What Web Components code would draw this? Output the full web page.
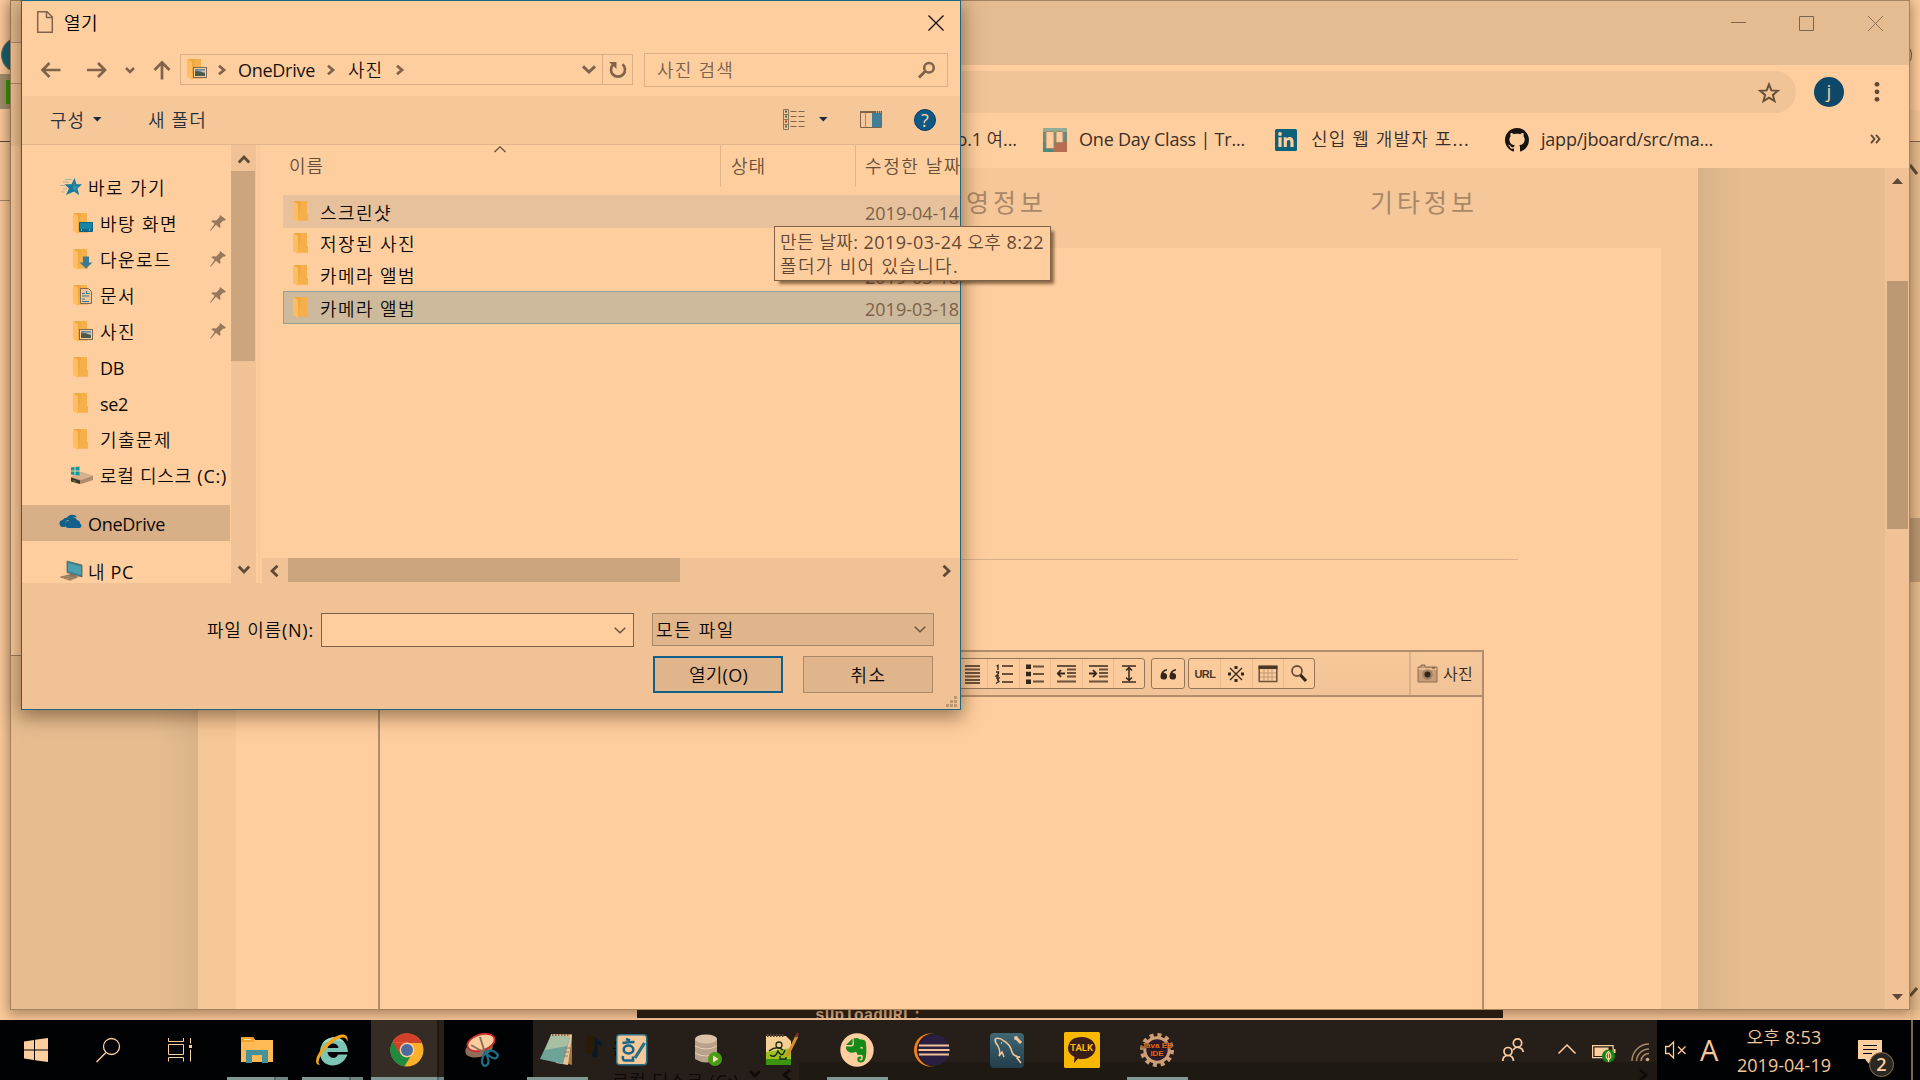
<!DOCTYPE html>
<html lang="ko">
<head>
<meta charset="utf-8">
<title>열기</title>
<style>
html,body{margin:0;padding:0;width:1920px;height:1080px;overflow:hidden;background:#fdcc9e}
body{font:400 18px/24px "Open Sans","Noto Sans CJK KR DemiLight","Noto Sans CJK KR Light","Noto Sans CJK KR",sans-serif;color:#17130f}
</style>
</head>
<body>
<desk-top></desk-top>
<script>
const def=(name,css,html)=>customElements.define(name,class extends HTMLElement{
  constructor(){super();this.attachShadow({mode:'open'}).innerHTML=
    `<style>*{box-sizing:border-box}svg{display:block;flex:none;overflow:visible}:host{display:block;box-sizing:border-box}${css}</style>${html}`;}
});
const svg=(w,h,body,style='')=>`<svg width="${w}" height="${h}" viewBox="0 0 ${w} ${h}" fill="none" style="${style}">${body}</svg>`;

/* text run tracked to a fixed measure */
customElements.define('t-x',class extends HTMLElement{
  constructor(){super();this.attachShadow({mode:'open'}).innerHTML=
    '<style>:host{display:block;flex:none;white-space:pre}span{display:inline-block}</style><span><slot></slot></span>';}
  connectedCallback(){
    const w=+this.getAttribute('w'),n=this.textContent.length,s=this.shadowRoot.querySelector('span');
    if(!w)return;
    const nat=s.getBoundingClientRect().width;
    this.style.letterSpacing=((w+1-nat)/n)+'px';
    this.style.width=w+'px';
  }
});

const folder='<path d="M1 0h13v13l1 .6v5.8H5z" fill="#eda83f"/><path d="M8 0h6v13l1 .8v5.6H5z" fill="#f9b14c" opacity=".8"/><path d="M0 0l5 3v18l-5-3z" fill="#ffbc62"/>';
const pic='<rect x="6.500" y="8.500" width="13" height="10" fill="#fdcc9e" stroke="#836850"/><path d="M8 10h10v7H8z" fill="#5f86a5"/><path d="M8 12.500q4-1 10 2v2.500H8z" fill="#4b5a45"/><path d="M8 11.500q5 0 7 1.500l3 .5v-2z" fill="#d8bf9e"/>';
const I={
 folder:svg(21,21,folder),
 pictures:svg(21,21,folder+pic),
 desktop:svg(21,21,folder+'<path d="M6.500 9.500h13v9h-13z" fill="#1786a5" stroke="#0c5f85"/><path d="M7 17h12" stroke="#0b4a68"/><path d="M8 17h1M16 17h1" stroke="#ffce9f"/>'),
 down:svg(21,21,folder+'<path d="M10 7.500h6v6h3.500l-6.500 6-6.500-6H10z" fill="#3c7a91"/>'),
 docs:svg(21,21,folder+'<path d="M7.500 3.500h8l3 3v12h-11z" fill="#f3c596" stroke="#836850"/><path d="M9 8.500h3M13.500 8.500h3M9 11h7M9 14h3M9 16.500h7M13.500 6v3" stroke="#307d92" stroke-width="1.200"/>'),
 star:svg(22,18,'<path d="M14.500 0l2 6.300H22l-4.600 4.200 1.800 6.700-5.200-3.600L6 17l3-6.500L4.500 6.300h7z" fill="#16799b"/><path d="M5 1.500h7M3 4h6M0 7.500h5M3 11h4M1 14h4" stroke="#8aa79a" stroke-width=".7"/><path d="M14 3l1 5 4 0-3 2 1 4-4-3z" fill="#3793aa"/>'),
 drive:svg(23,18,'<path d="M0 11l10-5 12 4v4L10 18 0 15z" fill="#b08c6d"/><path d="M0 11l10-5 12 4-12 4z" fill="#d8b18c"/><path d="M0 11.500l9 3V18l-9-2.500z" fill="#403427"/><path d="M2 14.500l3 1" stroke="#3aa046"/><path d="M0 1.500l3.500-.5v3.500H0zM4.500 1l4-.6v4.100h-4zM0 5.500h3.500V9L0 8.500zM4.500 5.500h4v4.100l-4-.6z" fill="#0c9a9f"/>'),
 cloud:svg(22,14,'<path d="M5 13H3.500A3.500 3.500 0 0 1 2.600 6 5 5 0 0 1 7 3.500 6 6 0 0 1 17 3.200q-5-.6-6.600 2.300Q5 6 5 10.500z" fill="#11618c"/><path d="M8.500 14a3.500 3.500 0 0 1-.2-7 4.600 4.600 0 0 1 8.800-.8q3 .2 2.900 3.400a2.300 2.300 0 0 1-.4 4.400z" fill="#11618c"/>','margin-top:-4px'),
 pc:svg(24,21,'<path d="M8 0l15 4v12L8 11.500z" fill="#35849a"/><path d="M9 2l13 3.500v8.500L9 10z" fill="#4aa0ad"/><path d="M8 0l15 4v12L8 11.500z" stroke="#6b6257" stroke-width=".8"/><path d="M0 16l11-3 10 2.500L11 20z" fill="#b79470"/><path d="M2 16.300l9-2.300M5 17.300l10-2.300M9 18.300l9-2" stroke="#7f6b57" stroke-width=".8"/><path d="M11 12.500l6 1.600v2l-6-1z" fill="#86715c"/>','margin-left:-1px'),
 pin:svg(16,16,'<path d="M10 0l6 4.500-1.200 1-1.800.2-3 3 .6 3.300-1.300.8L6 9.800.8 15.700 0 15.500l4.600-6.700L1.300 6.300 2.600 5.200l3.500.2 3.300-3.100z" fill="#96795d"/>'),
};
const stroke=(d,w=1,c='#7f644c')=>`<path d="${d}" stroke="${c}" stroke-width="${w}"/>`;
const chevR=svg(9,10,stroke('M1 .8l5 4.200-5 4.200',2.800),'margin:0');
const thinV=svg(12,7,stroke('M.7.800l5.300 5 5.300-5',1.500,'#6b543f'));
const caret=svg(9,5,'<path d="M0 0h8.500L4.300 4.500z" fill="#1b2a38"/>');

def('title-row',`:host{height:43px;display:flex;padding:10px 0 0 15px}
t-x{margin:0 0 0 11px;color:#000}.x{margin:4px 16px 0 auto}`,
 svg(16,22,'<path d="M.7.700H10L15.300 6v15.300H.7z" stroke="#7f644c" stroke-width="1.500"/><path d="M9.500 1v5.500H15" stroke="#7f644c" stroke-width="1.500"/>')+
 `<t-x w="33">열기</t-x>`+svg(16,16,stroke('M.5.500l15 15M15.500.5l-15 15',1.300,'#120d08'),'').replace('<svg','<svg class="x"'));

def('address-row',`:host{height:52px;display:flex;padding-left:19px;position:static}
.n{display:flex;height:52px;align-items:center}.box{display:flex;align-items:center;height:31px;width:453px;border:1px solid #d7ae86;margin:10px 0 0 9px;padding-left:6px}
.r{border-left:1px solid #d7ae86;height:29px;width:30px;display:flex;align-items:center;justify-content:center}
.s{width:304px;height:34px;margin:9px 0 0 11px;border:1px solid #d7ae86;display:flex;align-items:center;padding:0 11px 0 12px;color:#7c624b}`,
 `<div class="n">${svg(20,16,stroke('M19.500 8H2M8.500 1L1.500 8l7 7',2.700))}${svg(20,16,stroke('M0 8h17.500M11 1l7 7-7 7',2.700),'margin-left:26px')}${svg(10,7,stroke('M1 1l4 4 4-4',2.500),'margin-left:18px')}${svg(18,19,stroke('M9 18.500V2M1.500 9L9 1.500 16.500 9',2.700),'margin-left:18px')}</div>
 <div class="box" style="color:#17130f">${I.pictures}<i style="width:10px"></i>${chevR}<t-x w="76" style="margin-left:11px">OneDrive</t-x><i style="width:13px"></i>${chevR}<t-x w="34" style="margin-left:12px">사진</t-x><i style="width:14px"></i>${chevR}
 <i style="flex:1"></i>${svg(14,9,stroke('M1 1.300l6 5.700 6-5.700',3),'margin-right:6px')}<div class="r">${svg(18,18,'<path d="M4.500 3.300A7 7 0 1 0 13.500 3.300" stroke="#7f644c" stroke-width="2.700"/><path d="M0 1h7.500v7z" fill="#7f644c"/>')}</div></div>
 <div class="s"><t-x w="76">사진 검색</t-x><i style="flex:1"></i>${svg(18,18,'<circle cx="11" cy="6.700" r="4.800" stroke="#7f644c" stroke-width="2.500"/><path d="M7.500 10L1 16.500" stroke="#7f644c" stroke-width="3"/>')}</div>`);

def('command-bar',`:host{height:49px;display:flex;align-items:center;background:#f5c799;border-bottom:1px solid #e0b58b;padding-left:28px;padding-bottom:1px;color:#26313c}
.h{width:22px;height:22px;border-radius:50%;background:#0d5987;border:1px solid #083a5c;color:#ffce9f;display:grid;place-items:center;font:400 18px/20px "Open Sans"}`,
 `<t-x w="34">구성</t-x><i style="width:9px"></i>${caret}<t-x w="58" style="margin-left:46px">새 폴더</t-x><i style="width:577px"></i>
 ${svg(22,22,'<path d="M.5.500h5v20h-5zM.5 5.500h5M.5 10.500h5M.5 15.500h5" stroke="#8d7359"/><path d="M2 2.500h2M2 7.500h2M2 17.500h2" stroke="#35704c" stroke-width="2"/><path d="M2 12.500h2" stroke="#a3342a" stroke-width="2"/><path d="M7.500 2.500h6M15.500 2.500h6M7.500 7.500h6M15.500 7.500h6M7.500 12.500h6M15.500 12.500h6M7.500 17.500h6M15.500 17.500h6" stroke="#7f644c"/>')}<i style="width:14px"></i>${caret}<i style="width:32px"></i>
 ${svg(22,17,'<path d="M.5.500h21v16H.5z" stroke="#7f644c"/><path d="M0 1h22" stroke="#7f644c" stroke-width="2"/><path d="M5.500 2v14" stroke="#a98868"/><path d="M12 2h9v14h-9z" fill="#3f8096"/><path d="M16 1h1M18 1h1M20 1h1" stroke="#ffce9f"/>')}<i style="width:32px"></i><div class="h">?</div>`);

def('nav-item',`:host{height:36px;display:flex;align-items:center;width:208px;padding-left:51px;color:#0c0907;flex:none}
:host([root]){padding-left:38px}:host([drive]){padding-left:49px}:host([selected]){background:#d8af87}
.i{width:27px;flex:none;display:flex;align-items:center;height:36px}:host([root]) .i{width:28px}:host([drive]) .i{width:29px}
.t{padding-top:1px}.p{display:none;margin-left:auto;margin-right:4px}:host([pinned]) .p{display:block}`,
 `<div class="i"><slot name="icon"></slot></div><div class="t"><slot></slot></div><div class="p">${I.pin}</div>`);
customElements.define('i-con',class extends HTMLElement{constructor(){super();this.attachShadow({mode:'open'});}
 connectedCallback(){this.shadowRoot.innerHTML='<style>:host{display:block}svg{display:block;overflow:visible}</style>'+I[this.getAttribute('name')];}});
const nav=(ic,t,w,a='')=>`<nav-item ${a}><i-con slot="icon" name="${ic}"></i-con><t-x w="${w}">${t}</t-x></nav-item>`;

def('nav-pane',`:host{width:209px;height:438px;overflow:hidden;padding-top:24px}`,
 nav('star','바로 가기',77,'root')+nav('desktop','바탕 화면',77,'pinned')+nav('down','다운로드',71,'pinned')+nav('docs','문서',35,'pinned')+nav('pictures','사진',35,'pinned')+
 nav('folder','DB',23)+nav('folder','se2',27)+nav('folder','기출문제',71)+nav('drive','로컬 디스크 (C:)',126,'drive')+
 '<div style="height:12px"></div>'+nav('cloud','OneDrive',76,'root selected')+'<div style="height:12px"></div>'+nav('pc','내 PC',45,'root'));

def('v-scroll',`:host{width:25px;height:438px;background:#f0c295;display:flex;flex-direction:column;align-items:center;padding-bottom:9px}
.t{width:24px;height:190px;background:#cca57e;margin-right:1px;margin-top:7px}`,
 svg(12,9,stroke('M.8 7.500L6 2l5.200 5.500',2.800,'#5f4a37'),'margin-top:10px')+'<div class="t"></div><i style="flex:1"></i>'+svg(12,9,stroke('M.8 1.500L6 7l5.200-5.500',2.800,'#5f4a37')));

def('file-row',`:host{height:32px;display:flex;flex:none;align-items:center;margin-left:21px;padding-left:10px;color:#0c0907}
:host([hover]){background:#e6c19b;height:33px;margin-bottom:-1px}:host([selected]){background:#cdb99b;border:1px solid #92a298;border-right:0;height:33px;padding-left:9px}
.d{margin-left:auto;color:#7d6249;padding-top:3px;width:95px}.n{margin-left:6px;padding-top:2px}`,
 `<i-con name="folder"></i-con><div class="n"><slot></slot></div><div class="d"><slot name="date"></slot></div>`);
const row=(t,w,d,a='')=>`<file-row ${a}><t-x w="${w}">${t}</t-x>${d?`<t-x w="93" slot="date">${d}</t-x>`:''}</file-row>`;

def('file-list',`:host{width:698px;height:438px;overflow:hidden;display:flex;flex-direction:column}
.h{display:flex;height:42px;align-items:center;color:#675039}.h>div{height:42px;display:flex;align-items:center;flex:none}
.c{border-left:1px solid #e0b58b}.sort{align-self:flex-start;margin-top:1px}
.s{height:25px;background:#f0c295;display:flex;align-items:center;margin-top:auto;padding:0 9px 0 8px}.t{width:392px;height:24px;background:#cca57e;align-self:flex-start;margin-left:9px}`,
 `<div class="h"><div style="width:458px;padding-left:27px"><t-x w="34">이름</t-x><div class="sort" style="margin-left:171px">${svg(12,7,stroke('M.5 6L6 .8 11.500 6',1.200,'#5f4a37'))}</div></div>
 <div class="c" style="width:135px;padding-left:10px"><t-x w="34">상태</t-x></div><div class="c" style="width:110px;padding-left:9px"><t-x w="96">수정한 날짜</t-x></div></div>
 <div style="height:8px;flex:none"></div>`+row('스크린샷',71,'2019-04-14','hover')+row('저장된 사진',95,'')+row('카메라 앨범',95,'2019-03-18')+row('카메라 앨범',95,'2019-03-18','selected')+
 `<div class="s">${svg(9,12,stroke('M7.500.8L2 6l5.500 5.200',2.800,'#5f4a37'))}<div class="t"></div><i style="flex:1"></i>${svg(9,12,stroke('M1.500.8L7 6l-5.500 5.200',2.800,'#5f4a37'))}</div>`);

def('dialog-foot',`:host{height:126px;background:#f0c295;padding-top:30px;color:#0c0907}
.r{display:flex;align-items:center}.a{width:313px;height:34px;border:1px solid #7b624b;background:#ffce9f;margin-left:8px}.b{width:282px;height:33px;background:#e0b58b;border:1px solid #a98868;margin-left:18px;margin-bottom:1px}
.a,.b{display:flex;align-items:center;padding:0 7px 0 3px}.b t-x{margin-right:auto;padding-top:1px}.a svg{margin-left:auto}
.btn{width:130px;height:37px;border:1px solid #a98868;background:#e0b58b;display:grid;place-items:center;padding-top:1px}.ok{border:2px solid #126089}`,
 `<div class="r" style="padding-left:185px;height:34px"><t-x w="106">파일 이름(N):</t-x><div class="a">${thinV}</div><div class="b"><t-x w="78">모든 파일</t-x>${thinV}</div></div>
 <div class="r" style="padding:9px 0 0 631px;gap:20px"><div class="btn ok"><t-x w="58">열기(O)</t-x></div><div class="btn"><t-x w="35">취소</t-x></div></div>
 ${svg(11,11,'<path d="M8 0h3v3H8zM8 4h3v3H8zM8 8h3v3H8zM4 4h3v3H4zM4 8h3v3H4zM0 8h3v3H0z" fill="#bd9771"/>','margin:3px 0 0 924px')}`);

def('open-dialog',`:host{width:940px;height:710px;border:1px solid #1b6585;background:#ffce9f;box-shadow:0 5px 18px 2px rgba(60,35,10,.5);overflow:hidden}
.b{display:flex;height:438px}.sp{width:6px;height:438px;border:solid #ffce9f;border-width:0 2px 0 2px;background:#f8c99b}`,
 `<title-row></title-row><address-row></address-row><command-bar></command-bar><div class="b"><nav-pane></nav-pane><v-scroll></v-scroll><div class="sp"></div><file-list></file-list></div><dialog-foot></dialog-foot>`);

def('tool-tip',`:host{width:277px;height:55px;border:1px solid #7f6349;background:#ffce9f;padding:3px 0 0 5px;color:#5e4936;box-shadow:4px 4px 3px -1px rgba(60,35,10,.6)}`,
 `<t-x w="263">만든 날짜: 2019-03-24 오후 8:22</t-x><t-x w="178">폴더가 비어 있습니다.</t-x>`);

/* browser */
def('caption-bar',`:host{height:64px;background:#e5bc91;display:flex;justify-content:flex-end;padding:15px 25px 0 0;gap:53px}`,
 svg(16,16,stroke('M1 6.500h15',1,'#7f644c'))+svg(16,16,'<path d="M.5.500h14v14H.5z" stroke="#7f644c"/>')+svg(16,16,stroke('M0 0l15 15M15 0L0 15',1,'#8c7057')));
def('omni-row',`:host{height:54px;display:flex;padding-top:6px}
.o{height:42px;background:#f0c497;border-radius:0 21px 21px 0;width:1785px;display:flex;align-items:center;justify-content:flex-end;padding-right:16px}
.a{width:30px;height:30px;border-radius:50%;background:#0d4868;color:#ffce9f;margin:6px 0 0 18px;display:grid;place-items:center;line-height:28px;font-size:19px;padding-bottom:3px}`,
 `<div class="o">${svg(22,21,'<path d="M11 2.500l2.400 5.900 6.400.4-4.900 4.100 1.600 6.200L11 15.700l-5.500 3.400 1.600-6.200L2.200 8.800l6.400-.4z" stroke="#6b5039" stroke-width="2"/>')}</div><div class="a">j</div>${svg(6,22,'<circle cx="3" cy="3.300" r="2.400" fill="#5f4a37"/><circle cx="3" cy="10.800" r="2.400" fill="#5f4a37"/><circle cx="3" cy="18.300" r="2.400" fill="#5f4a37"/>','margin:10px 0 0 30px')}`);
def('bookmark-row',`:host{height:49px;display:flex;align-items:center;padding:0 0 8px 932px;color:#3a2f28}t-x{padding-bottom:1px}`,
 `<t-x w="73">No.1 여...</t-x>
 ${svg(24,24,'<rect width="24" height="24" rx="1.500" fill="#6f8a76"/><path d="M0 24V15l8-3 4 4v8z" fill="#4b8b7f"/><path d="M0 0h24v4H0z" fill="#8fae95"/><path d="M10 24q0-9 8-11l6 1v10z" fill="#b66e50"/><rect x="3" y="3.500" width="8" height="17" rx="1" fill="#ffce9f" stroke="#a98966"/><rect x="13" y="3.500" width="7" height="11" rx="1" fill="#ffce9f" stroke="#a98966"/>','margin-left:27px')}<t-x w="165" style="margin-left:12px">One Day Class | Tr...</t-x>
 ${svg(22,22,'<rect width="22" height="22" rx="1.500" fill="#0d6179"/><circle cx="5" cy="5" r="1.900" fill="#ffce9f"/><path d="M3.400 8.300h3.200V18H3.400zM8.700 8.300h3v1.400c1.800-2.700 6.900-2.200 6.900 3V18h-3.200v-5c0-2.800-3.500-2.600-3.500 0v5H8.700z" fill="#ffce9f"/>','margin-left:31px')}<t-x w="158" style="margin-left:14px">신입 웹 개발자 포...</t-x>
 <svg width="24" height="24" viewBox="0 0 16 16" style="margin-left:36px"><path fill="#17130f" d="M8 0C3.580 0 0 3.580 0 8c0 3.540 2.290 6.530 5.470 7.590.4.070.55-.17.55-.38 0-.19-.01-.82-.01-1.490-2.010.37-2.530-.49-2.690-.94-.09-.23-.48-.94-.82-1.130-.28-.15-.68-.52-.01-.53.63-.01 1.080.58 1.230.82.72 1.210 1.870.87 2.330.66.07-.52.28-.87.51-1.070-1.780-.2-3.640-.89-3.640-3.950 0-.87.31-1.590.82-2.150-.08-.2-.36-1.020.08-2.120 0 0 .67-.21 2.200.82.64-.18 1.320-.27 2-.27s1.360.09 2 .27c1.530-1.040 2.200-.82 2.200-.82.44 1.100.16 1.920.08 2.120.51.56.82 1.270.82 2.150 0 3.070-1.870 3.750-3.650 3.950.29.25.54.73.54 1.480 0 1.070-.01 1.930-.01 2.200 0 .21.15.46.55.38A8.010 8.010 0 0 0 16 8c0-4.420-3.580-8-8-8z"/></svg><t-x w="171" style="margin-left:12px">japp/jboard/src/ma...</t-x>
 ${svg(11,10,stroke('M1 .8L4.500 5 1 9.200M6 .8L9.500 5 6 9.200',1.900,'#5f4a37'),'margin:0 0 1px 158px')}`);

const ed=(b)=>`<div class="k">${svg(20,20,b)}</div>`,L='#6a513b',D='#33261b';
def('editor-box',`:host{width:1106px;height:400px;border:2px solid #b28d6b;border-bottom:0}
.tb{height:45px;border-bottom:2px solid #b28d6b;display:flex;background:linear-gradient(#f5c799,#f2c396);padding-top:6px}
.g{display:flex;height:31px;border:1px solid #94755a;border-radius:3px;background:#fbcb9c}.k{width:31.400px;display:grid;place-items:center;border-left:1px solid #e8bb8f}.k:first-child{border-left:0}
.ph{margin:-6px 0 0 auto;height:43px;width:73px;border-left:2px solid #dab088;display:flex;align-items:center;padding-left:6px;font-size:16px;color:#33261b}
.u{font:700 11px/14px "Liberation Sans";color:#4b3828}`,
 `<div class="tb"><div class="g" style="margin-left:575px">`+
 ed(stroke('M3 2h15M3 5.500h15M3 9h15M3 12.500h15M3 16h15M3 19h15',1.800,L))+
 ed(stroke('M8 2h11M8 10h11M8 18h11',1.900,L)+stroke('M2.500 2l1.500-.7V6M2 8h2.500v1.500L2 12h3M2 14h3l-1.500 2L5 17.500 2 19.500',1.300,D))+
 ed('<path d="M1 .5h5v4.500H1zM1 7.700h5v4.500H1zM1 15.500h5V20H1z" fill="#33261b"/>'+stroke('M8 2.500h11M8 10h11M8 17.500h11',1.900,L))+
 ed(stroke('M1 2h19M11 5.500h9M11 9h9M11 12.500h9M1 17.500h19',1.900,L)+stroke('M2 9.500h7M5 6L1.800 9.500 5 13',1.800,D))+
 ed(stroke('M1 2h19M11 5.500h9M11 9h9M11 12.500h9M1 17.500h19',1.900,L)+stroke('M1 9.500h7M5 6l3.200 3.500L5 13',1.800,D))+
 ed(stroke('M3 2h14M3 18h14',2,L)+stroke('M10 3.500v13M7 6.500l3-3 3 3M7 13.500l3 3 3-3',1.500,D))+
 `</div><div class="g" style="margin-left:6px">`+ed('<path d="M9 5Q3 6 2.500 12a3.300 3.300 0 1 0 3-3Q6 7 9 6.500zM18 5q-6 1-6.500 7a3.300 3.300 0 1 0 3-3q.5-2 3.500-2.500z" fill="#33261b"/>')+
 `</div><div class="g" style="margin-left:3px"><div class="k"><t-x class="u" w="20">URL</t-x></div>`+
 ed(stroke('M4 4l12 12M16 4L4 16',1.300,D)+'<path d="M8.500 2h3v3h-3zM8.500 15h3v3h-3zM2 8.500h3v3H2zM15 8.500h3v3h-3z" fill="#33261b"/>')+
 ed('<path d="M1.200 2.500h17.600v15H1.200z" stroke="#6a513b" stroke-width="1.500"/><path d="M.5 1.500h19V5H.5z" fill="#4b3828"/><path d="M2 9h16M2 13h16M6 5v12M10 5v12M14 5v12" stroke="#c29a75"/>')+
 ed('<circle cx="8" cy="7" r="5" stroke="#6a513b" stroke-width="1.800"/><path d="M11.500 11l5.500 6" stroke="#33261b" stroke-width="3.200"/>')+
 `</div><div class="ph">${svg(21,19,'<path d="M1 3h3V1h4v2h12v15H1z" fill="#c79d77" stroke="#8b6d53"/><path d="M1.500 5h18" stroke="#e8bb8f" stroke-width="2"/><circle cx="10.500" cy="10.500" r="5.200" fill="#a37f60"/><circle cx="10.500" cy="10.500" r="3" fill="#33261b"/><path d="M15 4h3" stroke="#5f4a37"/>')}<t-x w="29" style="margin-left:5px">사진</t-x></div></div>`);

def('page-view',`:host{height:841px;display:flex;background:#e7bd90;overflow:hidden}
.l{width:187px;background:linear-gradient(90deg,#e7bd90 145px,#dbb388)}.r{width:187px;background:linear-gradient(270deg,#e7bd90 145px,#dab288)}
.w{width:1500px;background:#f6c799;padding:0 37px 0 38px}.m{height:80px;display:flex;color:#a98868;font-size:25px;line-height:69px;padding-left:703px;font-family:"Open Sans","Noto Sans CJK KR",sans-serif}
.c{background:#ffce9f;height:761px}.hr{height:1px;background:#d9b089;margin:0 143px 0 143px}
.sb{width:24px;background:#f0c295;display:flex;flex-direction:column;align-items:center}.t{width:21px;height:248px;background:#bc9874;margin-top:97px}
editor-box{margin:90px 0 0 142px}`,
 `<div class="l"></div><div class="w"><div class="m"><t-x w="107">촬영정보</t-x><t-x w="107" style="margin-left:324px">기타정보</t-x></div><div class="c"><div style="height:311px"></div><div class="hr"></div><editor-box></editor-box></div></div><div class="r"></div>
 <div class="sb">${svg(11,6,'<path d="M0 6h11L5.500 0z" fill="#5f4a37"/>','margin-top:10px')}<div class="t"></div><i style="flex:1"></i>${svg(11,6,'<path d="M0 0h11L5.500 6z" fill="#5f4a37"/>','margin-bottom:9px')}</div>`);

def('browser-window',`:host{width:1900px;height:1010px;border:1px solid #a6835f;background:#ffce9f;box-shadow:0 3px 12px 2px rgba(60,35,10,.42);overflow:hidden}`,
 `<caption-bar></caption-bar><omni-row></omni-row><bookmark-row></bookmark-row><page-view></page-view>`);
def('popup-window',`:host{width:500px;height:656px;border:1px solid #9b7b5b;background:#ffce9f}
.a{height:42px;background:#e5bc91;border-bottom:1px solid #b3906d}.b{height:41px;background:#f7c89a;border-bottom:1px solid #b3906d}.c{height:62px;background:#f3c598}`,'<div class="a"></div><div class="b"></div><div class="c"></div>');

/* strips of the desktop that show round the windows */
def('back-layer',`:host{width:1920px;height:1020px;display:flex;background:#fdcc9e;overflow:hidden}
.l{width:10px;height:1020px;overflow:hidden}.r{width:10px;height:1020px;background:#e7bd90;margin-left:auto}
.k{align-self:flex-end;width:866px;height:11px;background:#221a13;margin:0 0 2px 627px;overflow:hidden;color:#dcb28a;font:700 16px/18px "Liberation Mono";padding-left:178px}`,
 `<div class="l"><div style="height:74px;padding:37px 0 0 1px">${svg(36,36,'<circle cx="18" cy="18" r="17.500" fill="#0d6178" stroke="#7b624b"/>')}</div><div style="height:35px;background:#a3906f;padding:6px 0 0 6px"><div style="width:5px;height:24px;background:#2c9a06"></div></div><div style="height:33px;border-bottom:1px solid #5f4a37"></div><div style="height:59px;border-bottom:1px solid #a98868;background:#f9ca9c"></div></div>
 <div class="k"><t-x w="106">sUploadURL:</t-x></div>
 <div class="r"><div style="height:110px;background:#ffce9f;padding-top:48px">${svg(3,14,stroke('M0 1q3 6 0 12',1.200))}</div><div style="height:32px;background:#f6c799;border-bottom:1px solid #7b624b"></div>${svg(8,12,stroke('M0 1l7 9',3,'#5f4a37'),'margin-top:22px')}<div style="height:64px;background:#bc9874;margin-top:342px"></div>${svg(8,12,stroke('M0 10l7-8',3,'#5f4a37'),'margin-top:404px')}<div style="height:24px;background:#f0c295;margin-top:12px"></div></div>`);

/* taskbar */
customElements.define('task-button',class extends HTMLElement{constructor(){super();this.attachShadow({mode:'open'}).innerHTML=
`<style>:host{display:flex;flex-direction:column;width:75px;height:60px;flex:none;align-items:center;justify-content:flex-end}
.i{height:57px;display:flex;align-items:center;padding-top:3px;box-sizing:border-box}.u{height:3px;width:61px;margin-left:2px}
:host([run]) .u{background:#7f9893}:host([multi]) .u{background:linear-gradient(90deg,#7f9893 47px,#56696a 47px 49px,#6d8481 49px)}
:host([active]) .i{width:73px;margin-left:2px;justify-content:center;box-sizing:border-box;padding-right:1px;background:linear-gradient(90deg,#352c26 66px,#1f1812 66px 68px,#28221a 68px)}:host([active]) .u{width:73px;background:linear-gradient(90deg,#7f9893 66px,#56696a 66px 68px,#6d8481 68px)}</style><div class="i"><slot></slot></div><div class="u"></div>`;}});
const P='#ffce9f',tb=(b,a='')=>`<task-button ${a}>${b}</task-button>`;
def('task-bar',`:host{width:1920px;height:60px;background:#010204;display:flex;position:relative}
.sys{display:flex;width:219px;flex:none}.sys div{width:72px;display:grid;place-items:center}
.apps{display:flex}.glass{position:absolute;left:533px;top:0;width:1124px;height:60px;background:#261e19;overflow:hidden;color:#0c0907}
.glass .low{position:absolute;left:266px;top:42px;right:0;height:18px;background:#1e1913}.glass t-x,.glass svg{position:absolute}
.apps,.tray{position:relative}.tray{display:flex;align-items:center;color:#f5c79a;flex:1}.clock{display:flex;flex-direction:column;align-items:center;gap:4px;margin:1px 0 0 17px;width:95px}
.nt{margin-left:27px;display:flex}.bd{width:25px;height:25px;border-radius:50%;background:#2b2723;border:1px solid #8b7055;font:600 18px/22px "Open Sans";color:#ffce9f;text-align:center;margin:28px 0 0 -13px;box-sizing:border-box}`,
`<div class="glass"><div class="low"></div>${svg(20,22,'<path d="M1 0h9v20l-9-3z" fill="#2a1b06"/><path d="M11 18V4l6 5" stroke="#081a2a" stroke-width="3"/><circle cx="10" cy="18" r="3" fill="#081a2a"/>','left:52px;top:16px')}<t-x w="17" style="left:79px;top:16px">음</t-x><t-x w="126" style="left:79px;top:49px">로컬 디스크 (C:)</t-x>${svg(12,9,stroke('M1 1l5 5 5-5',2.800,'#0f0b08'),'left:216px;top:50px')}${svg(9,12,stroke('M8 1L2 6l6 5',2.800,'#0f0b08'),'left:249px;top:49px')}${svg(9,12,stroke('M1 1l6 5-6 5',2.800,'#0f0b08'),'left:1106px;top:49px')}</div>
<div class="sys"><div>${svg(24,24,'<path d="M0 3.500L10 2v9.500H0zM11 1.800L24 0v11.500H11zM0 12.500h10V22L0 20.500zM11 12.500h13V24l-13-1.800z" fill="#ffce9f"/>')}</div><div>${svg(24,24,'<circle cx="15.500" cy="8.500" r="8" stroke="#ffce9f" stroke-width="1.300"/><path d="M10 14.500L.5 24" stroke="#ffce9f" stroke-width="1.500"/>')}</div><div>${svg(24,24,'<path d="M.5 0v3.500h15V0M.5 6.500h15v10H.5zM.5 23.500v-4h15v4M22.500 0v5.500M22.500 11.500v12" stroke="#ffce9f"/><path d="M21 7h3v3h-3z" fill="#ffce9f"/>')}</div></div>
<div class="apps">`+
tb(svg(32,26,'<path d="M0 0h12l2 3h18v22H0z" fill="#ffb955"/><path d="M0 0h12l2 2.500L12 5H0z" fill="#f0a22a"/><path d="M3 2.500h7" stroke="#ffe0a0"/><path d="M5 26V13h22v13h-6v-8H11v8z" fill="#47919a"/>'),'run multi')+
tb(svg(34,34,'<path d="M33 19H12.500c.6 6.500 8.500 8 10.500 2.500h9.500C27 37.500 4 35.500 5 18.500 6 .5 31.500-1 33 19z" fill="#7cc5b4"/><path d="M12.500 15h11c-.6-6-10-6-11 0z" fill="#02060a"/><path d="M7 11C12 3 24 2 29 9q-10-4-22 2z" fill="#a5dcc4"/><path d="M5 32C-4 32 4 15 16 6.500 25 0 34-1 32.500 9 31 1.500 24 4.500 17 10 7 18 1 29 5 32z" fill="#f2a516"/>'),'run multi')+
tb(svg(34,34,'<circle cx="17" cy="17" r="16.500" fill="#ffb02a"/><path d="M2.500 9A16.500 16.500 0 0 0 14.500 33.300L21.500 22 17 17z" fill="#1f8b3e"/><path d="M2.500 9A16.500 16.500 0 0 1 32 10H17z" fill="#d2402c"/><path d="M2.500 9l7 12L17 17l0-7z" fill="#d2402c"/><path d="M2.500 9l7.300 12.300L14.500 33.300A16.500 16.500 0 0 1 2.500 9z" fill="#1f8b3e"/><circle cx="17" cy="17" r="7.400" fill="#ffce9f"/><circle cx="17" cy="17" r="6" fill="#4a6c9e"/>'),'active')+
tb(svg(34,34,'<ellipse cx="14" cy="16" rx="14" ry="8" fill="#8e6d58" transform="rotate(-15 14 16)"/><ellipse cx="16" cy="9.500" rx="14" ry="8" fill="#ffce9f" stroke="#cf2a2c" stroke-width="1.800" transform="rotate(-18 16 9.500)"/><path d="M15 4l5 16M6 12l14 8" stroke="#8b705c" stroke-width="2"/><path d="M20 19q-6 12 0 14 7-2 0-14zM20 19q8-4 13 3-2 8-13-3z" stroke="#1f6d86" stroke-width="2.200"/>'))+
tb(svg(34,34,'<path d="M12 1h20v31l-6-2z" fill="#a37638"/><path d="M11 1l21 1-4 30-12-2z" fill="#e9c49a"/><path d="M11 2l19 2-7 27L0 26z" fill="#6fa397"/><path d="M11 2l19 2-3 9L5 17z" fill="#a9bfa2"/><path d="M12 2h18" stroke="#836850" stroke-width="2" stroke-dasharray="1.500 1.500"/><path d="M25 15h5M24 19h5M23 23h5" stroke="#947a60"/>'),'run')+
tb(svg(32,32,'<rect x=".7" y=".7" width="30" height="30" rx="3" fill="#f4c899" stroke="#2b6f85" stroke-width="1.500"/><path d="M6.500 9q6-1 12-1M10 5l4 1.500M7 22q-1 5 3 4.500h7v-4" stroke="#17648b" stroke-width="2.600"/><ellipse cx="12.500" cy="15.500" rx="4.800" ry="4" stroke="#17648b" stroke-width="2.600"/><path d="M28.500 9L19 24" stroke="#246f83" stroke-width="3.200"/>'))+
tb(svg(28,32,'<path d="M1 5v20q11 7 22 0V5z" fill="#b9a18b"/><ellipse cx="12" cy="5" rx="11" ry="4.500" fill="#dcc3a7"/><path d="M1 12q11 6 22 0M1 19q11 6 22 0" stroke="#ead0b0"/><circle cx="21" cy="25" r="7" fill="#4a9c18"/><path d="M19 21.500v7l5.500-3.500z" fill="#ffe0b5"/>','margin-left:3px'))+
tb(svg(34,34,'<path d="M1 3h20l5 5v24H1z" fill="#f3cf96"/><path d="M1 19l25-4v17H1z" fill="#9cc01e"/><path d="M1 26h25v6H1z" fill="#3c9410"/><path d="M2 2.500h18" stroke="#5f4a37" stroke-width="3" stroke-dasharray="1.500 1.500"/><path d="M4 18q8-6 14-1M5 22q5 4 8-4 4 8 7-1" stroke="#1d2c0a" stroke-width="1.500"/><circle cx="14" cy="12" r="3" stroke="#1d2c0a" stroke-width="1.300"/><path d="M15 23v3h6v-2" stroke="#1d2c0a" stroke-width="1.500"/><path d="M32 3L22 23" stroke="#d8902d" stroke-width="3"/><path d="M33 0l-2 4" stroke="#7d2d2a" stroke-width="2.500"/>'))+
tb(svg(34,34,'<circle cx="17" cy="17" r="16.700" fill="#ffce9f"/><path d="M12 6L6 12h5q1.500 0 1.500-1.500V6z" fill="#158a18"/><path d="M13.500 5.500q4-1.500 6 .8 5.500.2 6.300 2.700 1.500 12-.8 18-1 2.500-4 2.500-3.700 0-3.700-3.300t4-2.700v2.200q-1.800-.3-1.800.8 0 1.200 1.700 1 1.800-.3 1.600-4.500-.5-1.700-3-1.200-3 1-3-2l-.8-1q-4.500 2-7.500 0Q5.500 17 6 13.500h6q2-.8 2-2.500z" fill="#158a18"/><path d="M20.500 14q2.200-.8 2.700 1.800-1.500-.6-2.700 0z" fill="#ffce9f"/>'),'run')+
tb(svg(36,34,'<circle cx="16.500" cy="17" r="16.500" fill="#f0801b"/><circle cx="19.500" cy="17" r="16.600" fill="#261e19"/><circle cx="20" cy="17" r="15.500" fill="#2a1f42"/><path d="M5 12.500h30M4.500 17h31M5 21.500h30" stroke="#f0c295" stroke-width="2"/>'))+
tb(svg(34,35,'<defs><linearGradient id="m" x2="0" y2="1"><stop stop-color="#416774"/><stop offset="1" stop-color="#213e49"/></linearGradient></defs><rect width="34" height="35" rx="4" fill="url(#m)"/><path d="M5 6q4-2 9 2 6 3 8 11 1 4 8 5l-3 1 4 5M5 6q0 4 3 7 3 6 1 10l3-4 2 5M11 10h1" stroke="#f3c79c" stroke-width="1.500"/><path d="M26 5l5 5" stroke="#f3c79c" stroke-width="3"/><circle cx="26" cy="5" r="2" fill="#f3c79c"/>'))+
tb(`<div style="position:relative;width:36px;height:36px">${svg(36,36,'<rect width="36" height="36" rx="1.500" fill="#f9b800"/><path d="M18 5c8 0 13.500 5 13.500 11S26 27 18 27q-2 0-4-.5L10 31l.5-6Q4 22 4 16 5 5 18 5z" fill="#3a1c18"/>')}<b style="position:absolute;left:0;top:8px;width:36px;text-align:center;font:700 9.500px/16px Roboto;color:#f9b800">TALK</b></div>`)+
tb(`<div style="position:relative;width:34px;height:34px">${svg(34,34,'<circle cx="17" cy="17" r="15" stroke="#cf9e74" stroke-width="4" stroke-dasharray="4 3.850"/><circle cx="17" cy="17" r="12.200" fill="#2c1c2c" stroke="#cf9e74" stroke-width="3"/>')}<div style="position:absolute;left:2px;top:9px;width:30px;display:flex;flex-direction:column;align-items:center;font:700 8px/8px 'Liberation Sans';color:#e2701c;text-shadow:0 0 2px #1a0c08,0 0 1px #1a0c08"><t-x w="30">Java EE</t-x><t-x w="12">IDE</t-x></div></div>`,'run')+
`</div><div class="tray" style="margin-left:308px">`+
svg(22,23,'<g stroke="#ffce9f" stroke-width="1.700"><circle cx="15.500" cy="5" r="4.200"/><circle cx="6" cy="13.500" r="4"/><path d="M.8 23q0-5.500 5.200-5.500t5.500 5.500M11 12q2-3 5-2.700Q21 10 21.200 14"/></g>','margin-top:-2px')+
svg(18,10,stroke('M.5 9.500L9 1l8.500 8.500',1.500,P),'margin:0 0 3px 34px')+
svg(24,18,'<path d="M.6 1.600h20.500v12H.6z" stroke="#ffce9f" stroke-width="1.200"/><path d="M2.500 3.500h14v8.500h-14zM22 5h1.500v4H22z" fill="#ffce9f"/><circle cx="16.500" cy="12" r="6.500" fill="#138613"/><path d="M16.500 7.500q-5 4.500 0 8.500 5-4 0-8.500zM16.500 9v9" stroke="#ffce9f" stroke-width="1.200"/>','margin:5px 0 0 16px')+
svg(20,19,'<circle cx="16.500" cy="16.500" r="1.800" fill="#d4aa82"/><path d="M1 18A17 17 0 0 1 18 1M5.500 18A12.500 12.500 0 0 1 18 6M10 18a8 8 0 0 1 8-7.500" stroke="#a98868" stroke-width="1.500"/>','margin:4px 0 0 15px')+
svg(22,18,'<path d="M.6 5.500H4L8.500 1v16L4 12.500H.6zM13 5.500l7.500 7.500M20.500 5.500L13 13" stroke="#ffce9f" stroke-width="1.300"/>','margin-left:14px')+
`<t-x w="19" style="margin-left:13px;font:500 29px/36px 'Open Sans'">A</t-x><div class="clock"><t-x w="74">오후 8:53</t-x><t-x w="93">2019-04-19</t-x></div>
<div class="nt">${svg(24,24,'<path d="M0 0h24v19H14l-3.500 4.500L7 19H0z" fill="#ffce9f"/><path d="M5 5.500h14M5 9.500h14M5 13.500h9" stroke="#010204" stroke-width="1.200"/>','margin-top:16px')}<div class="bd">2</div></div><div style="width:2px;height:60px;background:#7b6450;margin-left:17px"></div></div>`);

def('desk-top',`:host{position:relative;width:1920px;height:1080px;overflow:hidden}
back-layer,browser-window,popup-window,open-dialog,tool-tip,task-bar{position:absolute}
back-layer{left:0;top:0}browser-window{left:10px;top:0}popup-window{left:10px;top:0}open-dialog{left:21px;top:0}tool-tip{left:774px;top:226px}task-bar{left:0;top:1020px}`,
`<back-layer></back-layer><browser-window></browser-window><popup-window></popup-window><open-dialog></open-dialog><tool-tip></tool-tip><task-bar></task-bar>`);
</script>
</body>
</html>
